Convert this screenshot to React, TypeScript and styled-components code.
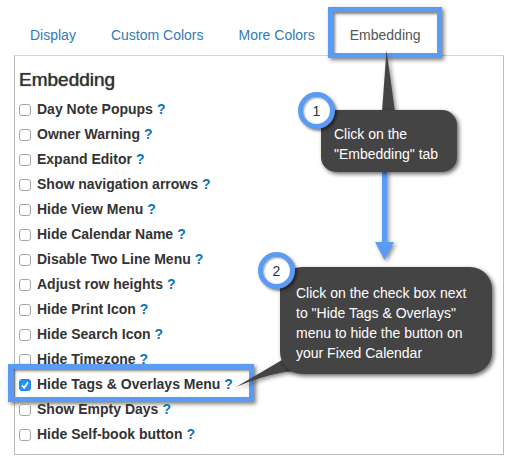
import React, { useState } from "react";
import styled, { createGlobalStyle, css } from "styled-components";

const BLUE = "#5a9bf6";
const DARK = "#444444";

const GlobalStyle = createGlobalStyle`
  *, *::before, *::after { box-sizing: border-box; }
  body {
    margin: 0;
    background: #fff;
    color: #333;
    font-family: "Liberation Sans", Arial, Helvetica, sans-serif;
    font-size: 14px;
    line-height: 20px;
  }
`;

const Page = styled.main`
  position: relative;
  min-width: 515px;
  padding: 15px 11px 12px 14px;
`;

const Tabs = styled.nav`
  display: flex;
  gap: 3px;
`;

const Tab = styled.button<{ $active?: boolean }>`
  position: relative;
  height: 40px;
  padding: 0 16px;
  border: 0;
  background: ${(p) => (p.$active ? "#fff" : "transparent")};
  color: ${(p) => (p.$active ? "#555" : "#337ab7")};
  font: inherit;
  cursor: pointer;
`;

const highlight = css`
  position: absolute;
  border: 5px solid ${BLUE};
  box-shadow: 2px 2px 4px rgba(0, 0, 0, 0.5), inset 2px 2px 3px rgba(0, 0, 0, 0.5);
  pointer-events: none;
`;

const TabHighlight = styled.span`
  ${highlight}
  inset: -8px -5px -3px -6px;
`;

const RowHighlight = styled.span`
  ${highlight}
  top: -8px;
  left: -11px;
  width: 246px;
  height: 38px;
`;

const Panel = styled.section`
  padding: 12px 4px 7px;
  border: 1px solid #bbb;
  border-top-color: #d5d5d5;
`;

const Heading = styled.h1`
  margin: 0 0 5px;
  font-size: 19px;
  font-weight: 400;
  line-height: 24px;
  text-shadow: 0 0 1px #333;
`;

const Options = styled.ul`
  margin: 0;
  padding: 0;
  list-style: none;
`;

const Option = styled.li`
  position: relative;
  display: flex;
  gap: 4px;
  height: 25px;
  line-height: 24px;
`;

const OptionLabel = styled.label`
  display: flex;
  gap: 6px;
  font-weight: 700;
`;

const Box = styled.span`
  display: grid;
  width: 12px;
  height: 12px;
  margin-top: 7px;

  > * { grid-area: 1 / 1; }
`;

const BoxInput = styled.input`
  appearance: none;
  width: 12px;
  height: 12px;
  margin: 0;
  border: 1px solid #a6a6a6;
  border-radius: 3px;
  background: #fff;

  &:checked {
    border-color: #1a86ea;
    background: #2492f5;
  }
`;

const Tick = styled.svg`
  position: relative;
  width: 12px;
  height: 12px;
  pointer-events: none;
`;

const Help = styled.a`
  color: #0a74bb;
  font-weight: 700;
  text-decoration: none;
`;

const Drawing = styled.svg`
  position: absolute;
  top: 0;
  left: 0;
  width: 515px;
  height: 466px;
  pointer-events: none;
  filter: drop-shadow(2px 2px 2px rgba(0, 0, 0, 0.45));
`;

const Callout = styled.aside<{ $x: number; $y: number; $w: number; $large?: boolean }>`
  position: absolute;
  left: ${(p) => p.$x}px;
  top: ${(p) => p.$y}px;
  width: ${(p) => p.$w}px;
  padding: ${(p) => (p.$large ? "16px 12px 11px 16px" : "14px 8px 8px 13px")};
  border-radius: ${(p) => (p.$large ? 22 : 15)}px;
  background: ${DARK};
  box-shadow: 2px 2px 4px rgba(0, 0, 0, 0.6);
  color: #fff;
`;

const Line = styled.span`
  display: block;
  white-space: nowrap;
`;

const Step = styled.span<{ $large?: boolean }>`
  position: absolute;
  top: ${(p) => (p.$large ? -15 : -18)}px;
  left: ${(p) => (p.$large ? -22 : -23)}px;
  display: grid;
  place-items: center;
  width: 37px;
  height: 37px;
  border: 5px solid ${BLUE};
  border-radius: 50%;
  background: #fff;
  box-shadow: 2px 2px 3px rgba(0, 0, 0, 0.5), inset 1px 1px 2px rgba(0, 0, 0, 0.4);
  color: #333;
`;

const tabs = ["Display", "Custom Colors", "More Colors", "Embedding"];

const options = [
  "Day Note Popups",
  "Owner Warning",
  "Expand Editor",
  "Show navigation arrows",
  "Hide View Menu",
  "Hide Calendar Name",
  "Disable Two Line Menu",
  "Adjust row heights",
  "Hide Print Icon",
  "Hide Search Icon",
  "Hide Timezone",
  "Hide Tags & Overlays Menu",
  "Show Empty Days",
  "Hide Self-book button",
];

const TARGET = "Hide Tags & Overlays Menu";

function OptionRow({ name }: { name: string }) {
  const [checked, setChecked] = useState(name === TARGET);
  return (
    <Option>
      <OptionLabel>
        <Box>
          <BoxInput type="checkbox" checked={checked} onChange={() => setChecked(!checked)} />
          {checked && (
            <Tick viewBox="0 0 12 12" fill="none" stroke="#fff" strokeWidth="1.7" aria-hidden="true">
              <path d="M3 6.4 5.1 8.8 9 3.2" />
            </Tick>
          )}
        </Box>
        {name}
      </OptionLabel>
      <Help href="#help" aria-label={`Help: ${name}`}>?</Help>
      {name === TARGET && <RowHighlight />}
    </Option>
  );
}

export default function App() {
  return (
    <>
      <GlobalStyle />
      <Page>
        <Tabs>
          {tabs.map((name) => (
            <Tab key={name} type="button" $active={name === "Embedding"}>
              {name}
              {name === "Embedding" && <TabHighlight />}
            </Tab>
          ))}
        </Tabs>
        <Panel>
          <Heading>Embedding</Heading>
          <Options>
            {options.map((name) => (
              <OptionRow key={name} name={name} />
            ))}
          </Options>
        </Panel>

        <Drawing viewBox="0 0 515 466" aria-hidden="true">
          <path d="M382 170H387V242H394L384.5 260L375 242H382Z" fill={BLUE} />
          <path d="M386.5 50 395 112H382Z" fill={DARK} />
          <path d="M236 387 282 360 296 371Q272 372 236 387Z" fill={DARK} />
        </Drawing>
        <Callout $x={321} $y={110} $w={136}>
          <Line>Click on the</Line>
          <Line>"Embedding" tab</Line>
          <Step>1</Step>
        </Callout>
        <Callout $x={280} $y={267} $w={212} $large>
          <Line>Click on the check box next</Line>
          <Line>to "Hide Tags &amp; Overlays"</Line>
          <Line>menu to hide the button on</Line>
          <Line>your Fixed Calendar</Line>
          <Step $large>2</Step>
        </Callout>
      </Page>
    </>
  );
}
